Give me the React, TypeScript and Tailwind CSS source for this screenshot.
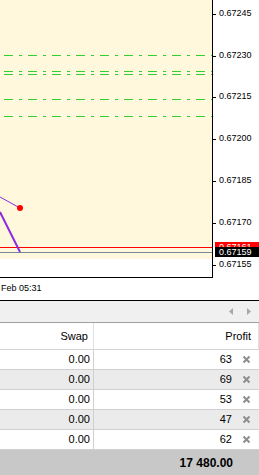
import React from "react";

const ticks: [string, number][] = [
  ["0.67245", 14],
  ["0.67230", 56],
  ["0.67215", 97],
  ["0.67200", 139],
  ["0.67185", 181],
  ["0.67170", 223],
  ["0.67155", 265],
];

const greens = [55, 71, 74, 99, 116];

const rows = [
  { swap: "0.00", profit: "63" },
  { swap: "0.00", profit: "69" },
  { swap: "0.00", profit: "53" },
  { swap: "0.00", profit: "47" },
  { swap: "0.00", profit: "62" },
];

function CloseX() {
  return (
    <svg width="9" height="9" viewBox="0 0 9 9" className="shrink-0">
      <path d="M1.5 1.5 L7.5 7.5 M7.5 1.5 L1.5 7.5" stroke="#8e8e8e" strokeWidth="2" />
    </svg>
  );
}

export default function App() {
  const font = { fontFamily: '"Liberation Sans", Arial, sans-serif' };
  return (
    <div className="w-[259px] h-[475px] bg-white overflow-hidden text-black" style={font}>
      {/* chart */}
      <div className="flex h-[278px]">
        <div className="w-[213px] h-full border-r border-b border-black flex flex-col">
          <div className="h-[259px] bg-[#fff8dc] relative">
            <svg width="212" height="259" className="absolute inset-0">
              {greens.map((y) => (
                <line
                  key={y}
                  x1="4"
                  x2="212"
                  y1={y + 0.5}
                  y2={y + 0.5}
                  stroke="#32cd32"
                  strokeWidth="1"
                  strokeDasharray="9 6 3 6"
                />
              ))}
              <line x1="0" x2="212" y1="247.5" y2="247.5" stroke="#ff0000" strokeWidth="1" />
              <line x1="0" x2="212" y1="252.5" y2="252.5" stroke="#778899" strokeWidth="1" />
              <line x1="0" y1="197" x2="20" y2="208" stroke="#8a2be2" strokeWidth="1" />
              <line x1="0" y1="212" x2="20" y2="252" stroke="#8a2be2" strokeWidth="2" />
              <circle cx="20" cy="208" r="3" fill="#ff0000" />
            </svg>
          </div>
          <div className="flex-1 bg-white" />
        </div>
        <div className="relative flex-1 text-[9px] leading-none">
          {ticks.map(([t, y]) => (
            <React.Fragment key={t}>
              <div className="absolute left-0 w-[3px] h-px bg-black" style={{ top: y }} />
              <div className="absolute left-[6px]" style={{ top: y - 5 }}>
                {t}
              </div>
            </React.Fragment>
          ))}
          <div className="absolute left-[2px] right-0 top-[242px] h-[10px] bg-[#ff0000] text-white pl-[4px] pt-[1px]">
            0.67161
          </div>
          <div className="absolute left-[2px] right-0 top-[247px] h-[10px] bg-black text-white pl-[4px] pt-[1px]">
            0.67159
          </div>
        </div>
      </div>
      {/* time axis */}
      <div className="h-[23px] border-b border-black flex items-center pl-[1px] text-[9px]">Feb 05:31</div>
      {/* tab bar */}
      <div className="h-[22px] bg-[#f0f0f0] border-b border-[#a0a0a0] flex items-center justify-end gap-[14px] pr-[8px]">
        <svg width="4" height="7" viewBox="0 0 4 7">
          <path d="M4 0 L0 3.5 L4 7 Z" fill="#a8a8a8" />
        </svg>
        <svg width="4" height="7" viewBox="0 0 4 7">
          <path d="M0 0 L4 3.5 L0 7 Z" fill="#a8a8a8" />
        </svg>
      </div>
      {/* header */}
      <div className="flex h-[27px] border-b border-[#d4d4d4] text-[11px]">
        <div className="w-[94px] border-r border-[#e0e0e0] flex items-center justify-end pr-[5px]">Swap</div>
        <div className="flex-1 border-r border-[#e0e0e0] flex items-center justify-end pr-[7px]">Profit</div>
      </div>
      {rows.map((r, i) => (
        <div
          key={i}
          className={`flex h-[20px] border-b border-[#d0d0d0] text-[11px] ${i % 2 === 1 ? "bg-[#ebebeb]" : "bg-white"}`}
        >
          <div className="w-[94px] border-r border-[#d0d0d0] flex items-center justify-end pr-[3px]">{r.swap}</div>
          <div className="flex-1 flex items-center justify-end pr-[8px] gap-[10px]">
            <span>{r.profit}</span>
            <CloseX />
          </div>
        </div>
      ))}
      <div className="h-[25px] bg-[#c8c8c8] flex items-center justify-end pr-[26px] text-[12px] font-bold">
        17 480.00
      </div>
    </div>
  );
}
